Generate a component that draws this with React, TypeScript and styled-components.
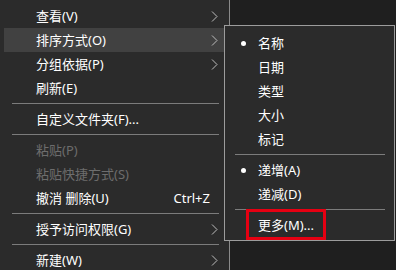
import styled, { createGlobalStyle } from 'styled-components';

const GlobalStyle = createGlobalStyle`
  html, body {
    margin: 0;
    padding: 0;
    background: #1f1f1f;
  }
  body {
    font-family: "Noto Sans", "Noto Sans CJK SC", sans-serif;
    -webkit-font-smoothing: antialiased;
  }
`;

const Screen = styled.div`
  position: relative;
  width: 396px;
  height: 270px;
  overflow: hidden;
  background: #1f1f1f;
  display: flex;
  align-items: flex-start;
`;

const Menu = styled.div`
  box-sizing: border-box;
  width: 230px;
  padding: 4px 5px 20px 4px;
  background: #2b2b2b;
  border-right: 1px solid #8a8a8a;
  display: flex;
  flex-direction: column;
`;

const Item = styled.div<{ $active?: boolean; $disabled?: boolean }>`
  height: 24px;
  display: flex;
  align-items: center;
  padding-left: 32px;
  font-size: 13px;
  line-height: 24px;
  white-space: nowrap;
  color: ${(p) => (p.$disabled ? '#6d6d6d' : '#ffffff')};
  background: ${(p) => (p.$active ? '#414141' : 'transparent')};
`;

const Label = styled.span`
  flex: 1;
`;

const Shortcut = styled.span`
  margin-right: 14px;
`;

const Arrow = styled.svg`
  width: 7px;
  height: 11px;
  margin-right: 6px;
  flex-shrink: 0;
`;

const Separator = styled.div<{ $left: number; $right: number }>`
  height: 1px;
  margin: 3px ${(p) => p.$right}px 3px ${(p) => p.$left}px;
  background: #7c7c7c;
`;

const SubMenu = styled.div`
  position: absolute;
  left: 224px;
  top: 25px;
  box-sizing: border-box;
  width: 171px;
  padding: 5px 0 3px;
  background: #2b2b2b;
  border: 1px solid #9c9c9c;
  display: flex;
  flex-direction: column;
`;

const SubItem = styled.div`
  height: 24px;
  display: flex;
  align-items: center;
  padding-left: 16px;
  font-size: 13px;
  line-height: 24px;
  color: #ffffff;
  white-space: nowrap;
`;

const BulletSlot = styled.span`
  width: 17px;
  display: flex;
  align-items: center;
`;

const Bullet = styled.span`
  width: 5px;
  height: 5px;
  border-radius: 50%;
  background: #ffffff;
`;

const Marked = styled.span`
  position: relative;
  display: inline-block;
  height: 24px;

  &::after {
    content: '';
    position: absolute;
    left: -12px;
    right: -12px;
    top: -4px;
    bottom: -3px;
    border: 3px solid #e60012;
  }
`;

const Chevron = () => (
  <Arrow viewBox="0 0 7 11">
    <polyline points="1,0.5 6,5.5 1,10.5" fill="none" stroke="#bdbdbd" strokeWidth="1" />
  </Arrow>
);

const App = () => {
  return (
    <Screen>
      <GlobalStyle />
      <Menu>
        <Item>
          <Label>查看(V)</Label>
          <Chevron />
        </Item>
        <Item $active>
          <Label>排序方式(O)</Label>
          <Chevron />
        </Item>
        <Item>
          <Label>分组依据(P)</Label>
          <Chevron />
        </Item>
        <Item>
          <Label>刷新(E)</Label>
        </Item>
        <Separator $left={8} $right={5} />
        <Item>
          <Label>自定义文件夹(F)...</Label>
        </Item>
        <Separator $left={8} $right={5} />
        <Item $disabled>
          <Label>粘贴(P)</Label>
        </Item>
        <Item $disabled>
          <Label>粘贴快捷方式(S)</Label>
        </Item>
        <Item>
          <Label>撤消 删除(U)</Label>
          <Shortcut>Ctrl+Z</Shortcut>
        </Item>
        <Separator $left={8} $right={5} />
        <Item>
          <Label>授予访问权限(G)</Label>
          <Chevron />
        </Item>
        <Separator $left={8} $right={5} />
        <Item>
          <Label>新建(W)</Label>
          <Chevron />
        </Item>
      </Menu>

      <SubMenu>
        <SubItem>
          <BulletSlot>
            <Bullet />
          </BulletSlot>
          名称
        </SubItem>
        <SubItem>
          <BulletSlot />
          日期
        </SubItem>
        <SubItem>
          <BulletSlot />
          类型
        </SubItem>
        <SubItem>
          <BulletSlot />
          大小
        </SubItem>
        <SubItem>
          <BulletSlot />
          标记
        </SubItem>
        <Separator $left={10} $right={9} />
        <SubItem>
          <BulletSlot>
            <Bullet />
          </BulletSlot>
          递增(A)
        </SubItem>
        <SubItem>
          <BulletSlot />
          递减(D)
        </SubItem>
        <Separator $left={10} $right={9} />
        <SubItem>
          <BulletSlot />
          <Marked>更多(M)...</Marked>
        </SubItem>
      </SubMenu>
    </Screen>
  );
};

export default App;
